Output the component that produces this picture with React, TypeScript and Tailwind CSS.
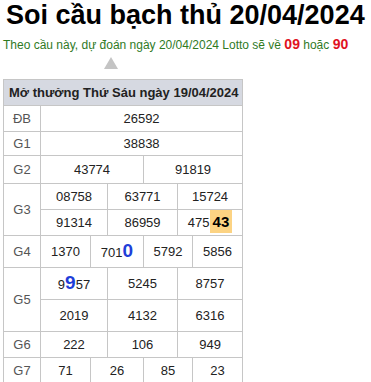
import React from "react";

type Cell = { span: number; node: React.ReactNode };

const cols = [37, 50, 17, 36, 34, 15, 50];

function Blue({ c }: { c: string }) {
  return <span className="text-[19px] font-bold text-[#1f3fd9] leading-none">{c}</span>;
}

const rows: { label: string; h: number; cells: Cell[][] }[] = [
  { label: "ĐB", h: 26, cells: [[{ span: 6, node: "26592" }]] },
  { label: "G1", h: 24, cells: [[{ span: 6, node: "38838" }]] },
  { label: "G2", h: 28, cells: [[{ span: 3, node: "43774" }, { span: 3, node: "91819" }]] },
  {
    label: "G3",
    h: 26,
    cells: [
      [
        { span: 2, node: "08758" },
        { span: 2, node: "63771" },
        { span: 2, node: "15724" },
      ],
      [
        { span: 2, node: "91314" },
        { span: 2, node: "86959" },
        {
          span: 2,
          node: (
            <>
              475
              <span className="bg-[#fcd383] px-[3px] py-[3px] text-[15px] font-bold text-black">43</span>
            </>
          ),
        },
      ],
    ],
  },
  {
    label: "G4",
    h: 32,
    cells: [
      [
        { span: 1, node: "1370" },
        { span: 2, node: <>701<Blue c="0" /></> },
        { span: 2, node: "5792" },
        { span: 1, node: "5856" },
      ],
    ],
  },
  {
    label: "G5",
    h: 32,
    cells: [
      [
        { span: 2, node: <>9<Blue c="9" />57</> },
        { span: 2, node: "5245" },
        { span: 2, node: "8757" },
      ],
      [
        { span: 2, node: "2019" },
        { span: 2, node: "4132" },
        { span: 2, node: "6316" },
      ],
    ],
  },
  { label: "G6", h: 26, cells: [[{ span: 2, node: "222" }, { span: 2, node: "106" }, { span: 2, node: "949" }]] },
  {
    label: "G7",
    h: 27,
    cells: [
      [
        { span: 1, node: "71" },
        { span: 2, node: "26" },
        { span: 2, node: "85" },
        { span: 1, node: "23" },
      ],
    ],
  },
];

export default function App() {
  return (
    <div className="w-[371px] h-[382px] bg-white overflow-hidden" style={{ fontFamily: "'Liberation Sans', Arial, sans-serif" }}>
      <h1 className="pl-[6px] text-[27px] font-bold leading-[30px] text-black whitespace-nowrap">
        Soi cầu bạch thủ 20/04/2024
      </h1>
      <p className="pl-[3px] mt-[6px] text-[12px] leading-[16px] text-[#2f7a1f] whitespace-nowrap">
        Theo cầu này, dự đoán ngày 20/04/2024 Lotto sẽ về{" "}
        <span className="text-[14px] font-bold text-[#e0131f]">09</span> hoặc{" "}
        <span className="text-[14px] font-bold text-[#e0131f]">90</span>
      </p>
      <div className="pl-[104px] mt-[4px] h-[12px] leading-none">
        <svg width="14" height="12" viewBox="0 0 14 12" className="block">
          <polygon points="7,0 14,12 0,12" fill="#c4c4c4" />
        </svg>
      </div>
      <table
        className="ml-[3px] mt-[10px] border-collapse table-fixed text-[13px] text-[#222]"
        style={{ width: 240 }}
      >
        <colgroup>
          {cols.map((w, i) => (
            <col key={i} style={{ width: w }} />
          ))}
        </colgroup>
        <tbody>
          <tr style={{ height: 26 }}>
            <th colSpan={7} className="border border-[#c6c6c6] bg-[#d6d9e1] px-[5px] text-left text-[13px] font-bold text-[#222] whitespace-nowrap">
              Mở thưởng Thứ Sáu ngày 19/04/2024
            </th>
          </tr>
          {rows.map((r) =>
            r.cells.map((line, li) => (
              <tr key={r.label + li} style={{ height: r.h }}>
                {li === 0 && (
                  <td rowSpan={r.cells.length} className="border border-[#c6c6c6] p-0 text-center text-[13px] text-[#555]">
                    {r.label}
                  </td>
                )}
                {line.map((c, ci) => (
                  <td key={ci} colSpan={c.span} className="border border-[#c6c6c6] p-0 text-center text-[13px] whitespace-nowrap">
                    {c.node}
                  </td>
                ))}
              </tr>
            ))
          )}
          <tr>
            <td colSpan={7} className="h-[2px] p-0 bg-[#c6c6c6]" />
          </tr>
        </tbody>
      </table>
    </div>
  );
}
